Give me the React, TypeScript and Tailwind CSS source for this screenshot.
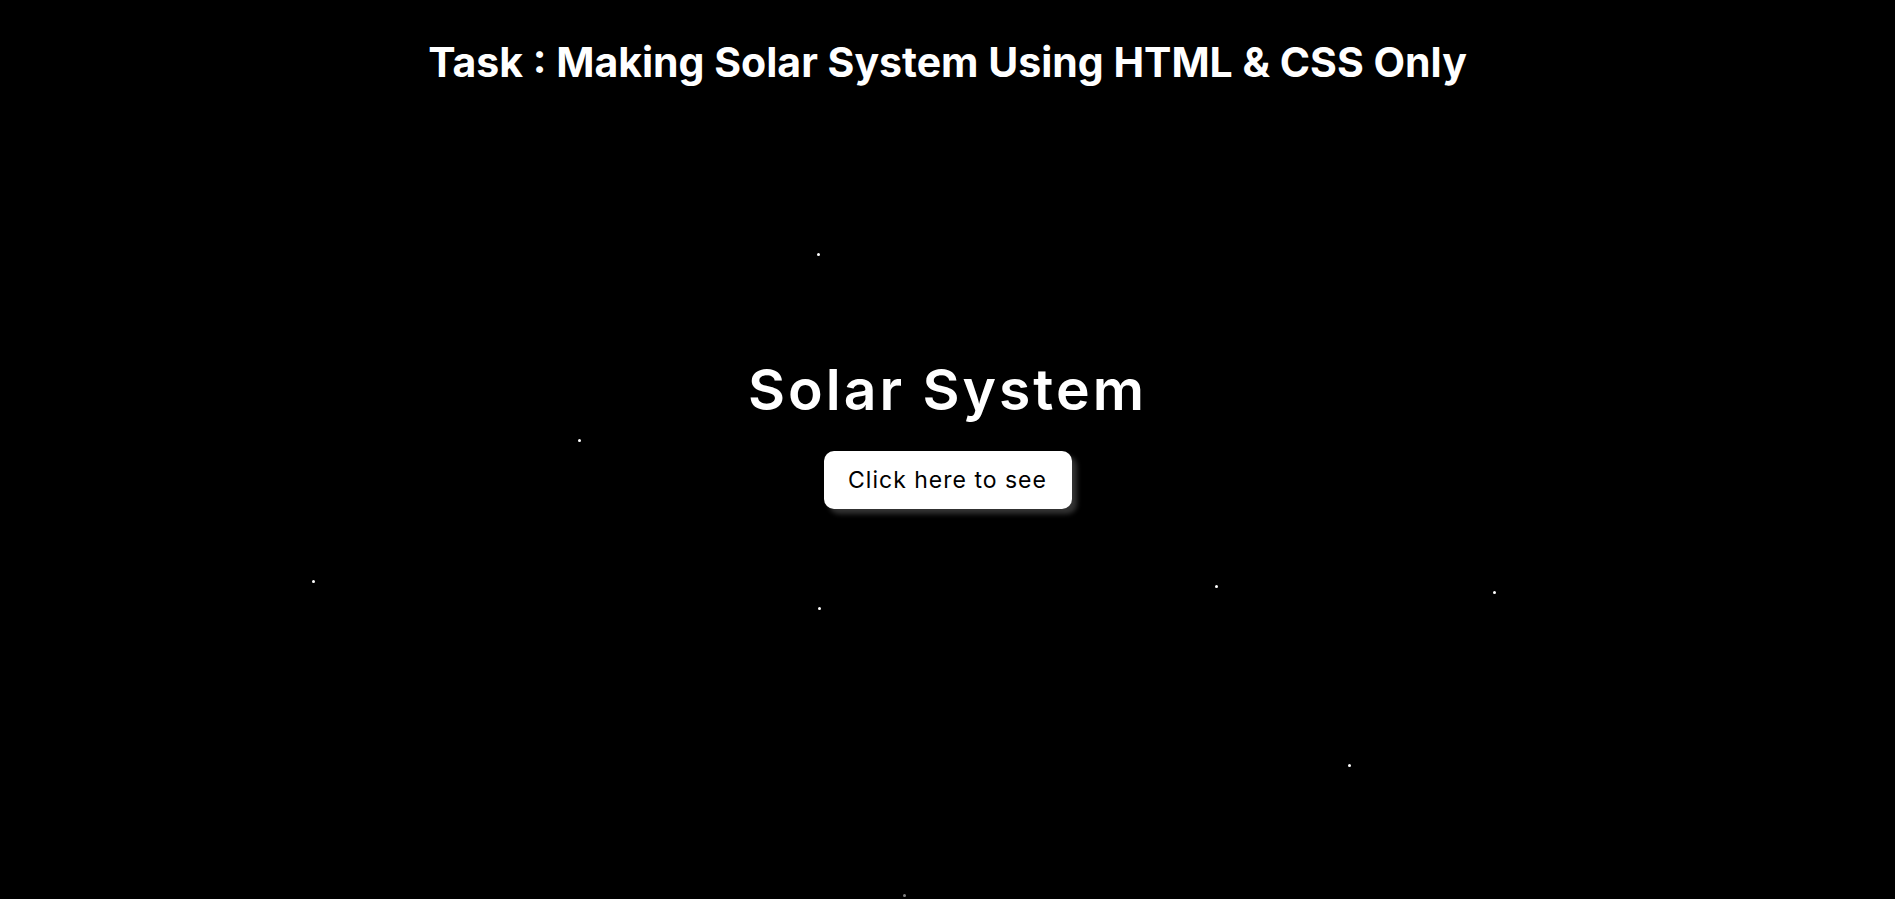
import React from "react";

const stars: {x: number; y: number; o: number}[] = [
 {x: 817, y: 253, o: 1},
 {x: 578, y: 439, o: 1},
 {x: 312, y: 580, o: 1},
 {x: 818, y: 607, o: 1},
 {x: 1215, y: 585, o: 1},
 {x: 1493, y: 591, o: 1},
 {x: 1348, y: 764, o: 1},
 {x: 903, y: 894, o: 0.5},
];

export default function App() {
 return (
  <div
   className="relative h-[899px] w-full overflow-hidden bg-black text-white"
   style={{fontFamily: "Inter, 'Open Sans', sans-serif"}}
  >
   {stars.map((s, i) => (
    <span
     key={i}
     className="absolute h-[3px] w-[3px] rounded-full bg-white"
     style={{left: s.x, top: s.y, opacity: s.o}}
    />
   ))}

   <div className="flex flex-col items-center">
    <h1 className="mt-[38px] text-[41px] font-bold leading-[48px]">
     Task : Making Solar System Using HTML &amp; CSS Only
    </h1>

    <h2 className="mt-[271px] text-[57px] font-semibold leading-[66px] tracking-[3px]">Solar System</h2>

    <button className="mt-[28px] h-[58px] w-[248px] rounded-[10px] bg-white text-[23px] tracking-[1px] text-black shadow-[5px_5px_5px_#333333]">
     Click here to see
    </button>
   </div>
  </div>
 );
}
